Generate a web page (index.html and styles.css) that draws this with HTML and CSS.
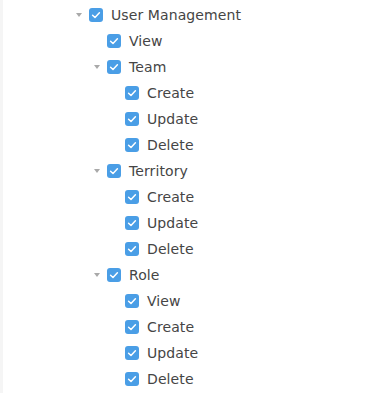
FILE: index.html
```html
<!DOCTYPE html>
<html lang="en">
<head>
    <meta charset="UTF-8">
    <meta name="viewport" content="width=device-width, initial-scale=1.0">
    <title>Permissions</title>
    <link rel="stylesheet" href="styles.css">
</head>
<body>
    <div class="panel">
        <ul class="tree">
            <!-- User Management -->
            <li class="node level-0">
                <span class="caret"></span>
                <span class="check"><svg viewBox="0 0 14 14"><path d="M3.6 7.2 L6 9.5 L10.4 4.8"/></svg></span>
                <span class="label">User Management</span>
            </li>
            <li class="node level-1">
                <span class="caret none"></span>
                <span class="check"><svg viewBox="0 0 14 14"><path d="M3.6 7.2 L6 9.5 L10.4 4.8"/></svg></span>
                <span class="label">View</span>
            </li>

            <!-- Team -->
            <li class="node level-1">
                <span class="caret"></span>
                <span class="check"><svg viewBox="0 0 14 14"><path d="M3.6 7.2 L6 9.5 L10.4 4.8"/></svg></span>
                <span class="label">Team</span>
            </li>
            <li class="node level-2">
                <span class="caret none"></span>
                <span class="check"><svg viewBox="0 0 14 14"><path d="M3.6 7.2 L6 9.5 L10.4 4.8"/></svg></span>
                <span class="label">Create</span>
            </li>
            <li class="node level-2">
                <span class="caret none"></span>
                <span class="check"><svg viewBox="0 0 14 14"><path d="M3.6 7.2 L6 9.5 L10.4 4.8"/></svg></span>
                <span class="label">Update</span>
            </li>
            <li class="node level-2">
                <span class="caret none"></span>
                <span class="check"><svg viewBox="0 0 14 14"><path d="M3.6 7.2 L6 9.5 L10.4 4.8"/></svg></span>
                <span class="label">Delete</span>
            </li>

            <!-- Territory -->
            <li class="node level-1">
                <span class="caret"></span>
                <span class="check"><svg viewBox="0 0 14 14"><path d="M3.6 7.2 L6 9.5 L10.4 4.8"/></svg></span>
                <span class="label">Territory</span>
            </li>
            <li class="node level-2">
                <span class="caret none"></span>
                <span class="check"><svg viewBox="0 0 14 14"><path d="M3.6 7.2 L6 9.5 L10.4 4.8"/></svg></span>
                <span class="label">Create</span>
            </li>
            <li class="node level-2">
                <span class="caret none"></span>
                <span class="check"><svg viewBox="0 0 14 14"><path d="M3.6 7.2 L6 9.5 L10.4 4.8"/></svg></span>
                <span class="label">Update</span>
            </li>
            <li class="node level-2">
                <span class="caret none"></span>
                <span class="check"><svg viewBox="0 0 14 14"><path d="M3.6 7.2 L6 9.5 L10.4 4.8"/></svg></span>
                <span class="label">Delete</span>
            </li>

            <!-- Role -->
            <li class="node level-1">
                <span class="caret"></span>
                <span class="check"><svg viewBox="0 0 14 14"><path d="M3.6 7.2 L6 9.5 L10.4 4.8"/></svg></span>
                <span class="label">Role</span>
            </li>
            <li class="node level-2">
                <span class="caret none"></span>
                <span class="check"><svg viewBox="0 0 14 14"><path d="M3.6 7.2 L6 9.5 L10.4 4.8"/></svg></span>
                <span class="label">View</span>
            </li>
            <li class="node level-2">
                <span class="caret none"></span>
                <span class="check"><svg viewBox="0 0 14 14"><path d="M3.6 7.2 L6 9.5 L10.4 4.8"/></svg></span>
                <span class="label">Create</span>
            </li>
            <li class="node level-2">
                <span class="caret none"></span>
                <span class="check"><svg viewBox="0 0 14 14"><path d="M3.6 7.2 L6 9.5 L10.4 4.8"/></svg></span>
                <span class="label">Update</span>
            </li>
            <li class="node level-2">
                <span class="caret none"></span>
                <span class="check"><svg viewBox="0 0 14 14"><path d="M3.6 7.2 L6 9.5 L10.4 4.8"/></svg></span>
                <span class="label">Delete</span>
            </li>
        </ul>
    </div>
</body>
</html>
```

FILE: styles.css
```css
body {
    margin: 0;
    background-color: #fff;
    font-family: "DejaVu Sans", "Noto Sans", sans-serif;
}
.panel {
    min-height: 393px;
    border-left: 3px solid #f5f5f5;
    padding-top: 2px;
}
.tree {
    list-style: none;
    margin: 0;
    padding: 0 0 0 69px;
}
.node {
    display: flex;
    align-items: center;
    height: 26px;
}
.level-1 {
    padding-left: 18px;
}
.level-2 {
    padding-left: 36px;
}
.caret {
    width: 17px;
    height: 26px;
    display: flex;
    align-items: center;
    justify-content: center;
}
.caret::before {
    content: "";
    border-left: 3.5px solid transparent;
    border-right: 3.5px solid transparent;
    border-top: 4px solid #a9a9a9;
    margin-right: 3px;
}
.caret.none::before {
    display: none;
}
.check {
    width: 14px;
    height: 14px;
    border-radius: 3px;
    background-color: #4a9ee6;
    display: flex;
}
.check svg {
    width: 14px;
    height: 14px;
}
.check path {
    fill: none;
    stroke: #fff;
    stroke-width: 1.5;
    stroke-linecap: round;
    stroke-linejoin: round;
}
.label {
    margin-left: 8px;
    font-size: 14px;
    color: #454545;
    letter-spacing: 0.1px;
}
```
